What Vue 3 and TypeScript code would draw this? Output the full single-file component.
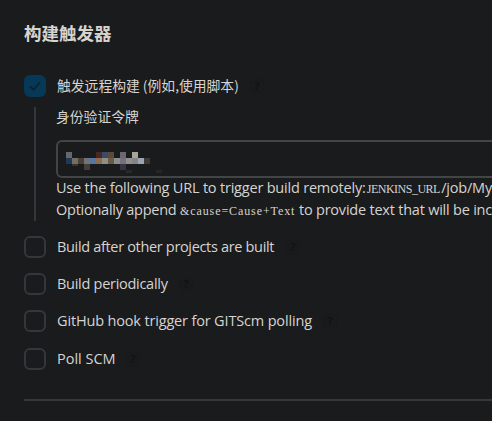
<script setup lang="ts">
interface Trigger {
  label: string
  kind: string
  checked: boolean
}

const remote: Trigger = { label: '触发远程构建 (例如,使用脚本)', kind: 'remote', checked: true }

const triggers: Trigger[] = [
  { label: 'Build after other projects are built', kind: 'after', checked: false },
  { label: 'Build periodically', kind: 'periodic', checked: false },
  { label: 'GitHub hook trigger for GITScm polling', kind: 'github', checked: false },
  { label: 'Poll SCM', kind: 'poll', checked: false },
]

// Masked token blocks: column, row, colour
const mask: [number, number, string][] = [
  [0, 0, '#66676b'], [5, 0, '#4a2528'], [6, 0, '#3a4a66'], [7, 0, '#5a4a3c'], [9, 0, '#6c6770'], [11, 0, '#a7a498'],
  [0, 1, '#1f3a58'], [1, 1, '#746e66'], [2, 1, '#4e3f34'], [3, 1, '#6f7478'], [4, 1, '#56779f'], [5, 1, '#8c6c50'],
  [6, 1, '#8f8f80'], [7, 1, '#6b5a48'], [8, 1, '#8c8c8c'], [9, 1, '#77717f'], [10, 1, '#8f8f8f'], [11, 1, '#848484'],
  [12, 1, '#9aa5b0'], [13, 1, '#3f3a36'],
  [3, 2, '#453e36'], [9, 2, '#35343f'],
]
</script>

<template>
  <section class="page">
    <h2 class="title">构建触发器</h2>

    <div class="row">
      <span class="box checked">
        <svg width="22" height="22" viewBox="0 0 22 22" fill="none">
          <path d="M6.5 11.8l3 2.9 6-6.7" stroke="#14202a" stroke-width="1.8" stroke-linecap="round" stroke-linejoin="round" />
        </svg>
      </span>
      <span class="label cjk" :class="remote.kind">{{ remote.label }}</span>
      <span class="help">?</span>
    </div>

    <div class="nested">
      <div class="field-label">身份验证令牌</div>
      <div class="input">
        <svg width="102" height="24" viewBox="0 0 102 24" shape-rendering="crispEdges">
          <rect v-for="([c, r, fill], i) in mask" :key="i" :x="c * 6" :y="r * 6" width="6" height="6" :fill="fill" />
          <rect x="6" y="12" width="6" height="2" fill="#3a332d" />
          <rect x="60" y="18" width="6" height="3" fill="#26282a" />
          <rect x="90" y="18" width="6" height="3" fill="#242628" />
        </svg>
      </div>
      <div class="hint"><span class="h1a">Use the following URL to trigger build remotely:</span><code class="c1">JENKINS_URL</code><span class="h1b">/job/My</span></div>
      <div class="hint"><span class="h2a">Optionally append</span><code class="c2">&amp;cause=Cause+Text</code><span class="h2b">to provide text that will be inc</span></div>
    </div>

    <div class="list">
      <div v-for="t in triggers" :key="t.kind" class="row">
        <span class="box"></span>
        <span class="label" :class="t.kind">{{ t.label }}</span>
        <span class="help">?</span>
      </div>
    </div>

    <hr class="divider" />
  </section>
</template>

<style>
body {
  background: #1a1b1d;
}
</style>

<style scoped>
.page {
  box-sizing: border-box;
  height: 421px;
  padding: 19px 0 0 24px;
  overflow: hidden;
  color: #d6d4d0;
  font-family: "Open Sans", "Noto Sans", "Noto Sans CJK SC", sans-serif;
  font-size: 14.5px;
  font-stretch: 88%;
}
.title {
  margin: 0 0 28px;
  height: 28px;
  font: 700 17.5px/27px "Noto Sans CJK SC", sans-serif;
}
.row {
  display: flex;
  align-items: center;
  height: 22px;
}
.box {
  box-sizing: border-box;
  flex: none;
  width: 22px;
  height: 22px;
  margin-right: 11px;
  border: 2px solid #34373a;
  border-radius: 6px;
}
.box.checked {
  border: 0;
  background: #063858;
}
.box svg,
.input svg {
  display: block;
}
.label {
  white-space: nowrap;
  line-height: 22px;
}
.label.cjk {
  height: 22px;
  font-family: "Noto Sans CJK SC", sans-serif;
  font-size: 13.8px;
  line-height: 20px;
}
.remote { width: 182px; }
.after { width: 218px; letter-spacing: -0.33px; }
.periodic { width: 111px; letter-spacing: -0.28px; }
.github { width: 255px; letter-spacing: -0.16px; }
.poll { width: 58px; }
.help {
  width: 16px;
  height: 16px;
  margin-left: 10px;
  border-radius: 50%;
  background: #191a1c;
  color: #111214;
  font: 700 11px/16px "Open Sans", sans-serif;
  text-align: center;
}
.nested {
  box-sizing: border-box;
  height: 114px;
  margin: 10px 0 15px 10px;
  padding-left: 20px;
  border-left: 2px solid #34373a;
}
.field-label {
  height: 33px;
  font: 13.8px/18px "Noto Sans CJK SC", sans-serif;
}
.input {
  box-sizing: border-box;
  height: 38px;
  padding: 10px 8px;
  border: 2px solid #424446;
  border-right: 0;
  border-radius: 6px 0 0 6px;
}
.hint {
  display: flex;
  height: 22px;
  line-height: 20px;
  white-space: nowrap;
}
.h1a { width: 313px; letter-spacing: -0.2px; }
.h1b { letter-spacing: -0.2px; }
.h2a { width: 124px; letter-spacing: -0.25px; }
.h2b { letter-spacing: -0.22px; }
code {
  font: 12px/23px "Liberation Serif", serif;
}
.c1 { width: 75px; letter-spacing: -0.5px; }
.c2 { width: 119px; letter-spacing: 0.9px; }
.list {
  display: grid;
  gap: 15px;
}
.list .row:last-child {
  margin-top: 1px;
}
.divider {
  height: 2px;
  margin: 29px 0 0;
  border: 0;
  background: #363739;
}
</style>
